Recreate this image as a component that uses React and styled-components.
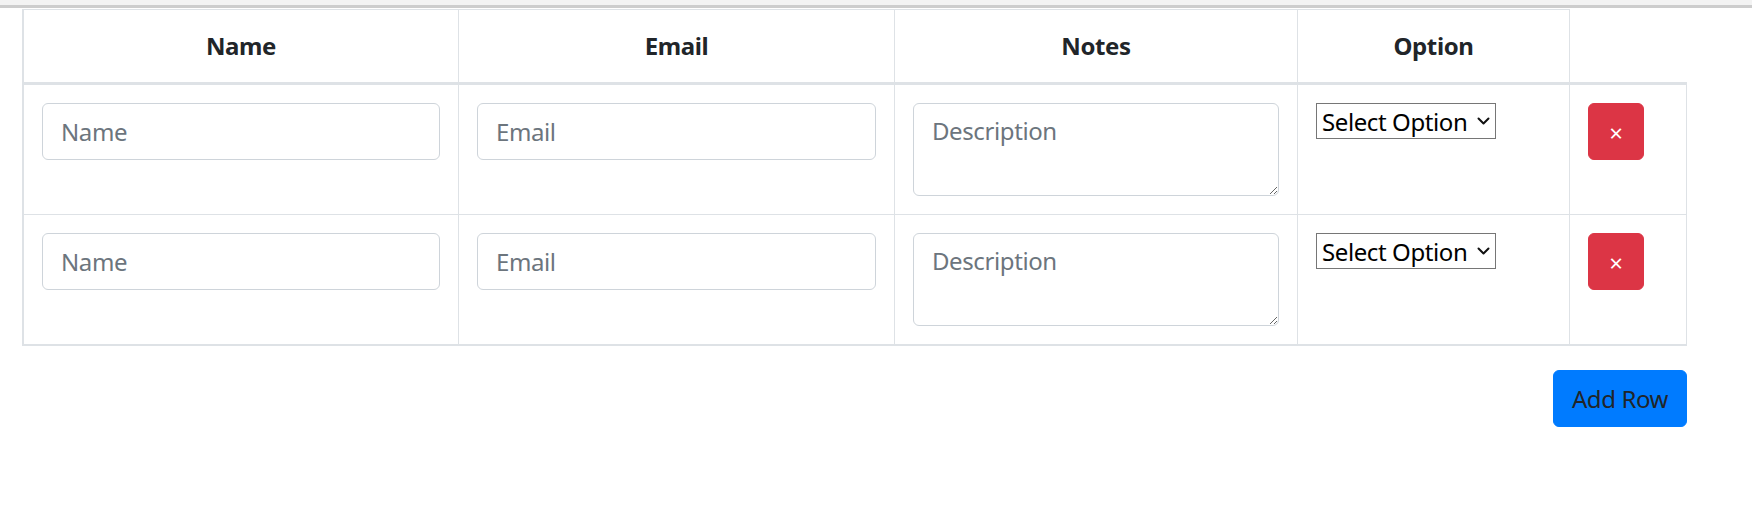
import React from 'react';
import styled, { createGlobalStyle } from 'styled-components';

const GlobalStyle = createGlobalStyle`
  body {
    margin: 0;
    background: #ffffff;
    font-family: "Noto Sans", "Open Sans", sans-serif;
    letter-spacing: -0.4px;
    color: #212529;
  }
  * {
    box-sizing: border-box;
  }
  input, textarea, select, button {
    letter-spacing: inherit;
  }
`;

const columns = [
  { key: 'name', label: 'Name', width: 435 },
  { key: 'email', label: 'Email', width: 436 },
  { key: 'notes', label: 'Notes', width: 403 },
  { key: 'option', label: 'Option', width: 272 },
];

const rows = [{ id: 1 }, { id: 2 }];

const ChevronIcon = () => (
  <svg width="13" height="8" viewBox="0 0 13 8" fill="none">
    <path d="M1.5 1.5 L6.5 6.5 L11.5 1.5" stroke="#111111" strokeWidth="2" strokeLinecap="round" strokeLinejoin="round" />
  </svg>
);

const OptionSelect = () => (
  <SelectWrap>
    <Select defaultValue="">
      <option value="">Select Option</option>
      <option value="a">Option A</option>
      <option value="b">Option B</option>
    </Select>
    <SelectArrow>
      <ChevronIcon />
    </SelectArrow>
  </SelectWrap>
);

const App = () => {
  return (
    <Page>
      <GlobalStyle />
      <TopBar />
      <Wrapper>
        <Table>
          <thead>
            <tr>
              {columns.map((col) => (
                <Th key={col.key} $w={col.width}>
                  {col.label}
                </Th>
              ))}
            </tr>
          </thead>
          <tbody>
            {rows.map((row, i) => (
              <Row key={row.id} $first={i === 0} $last={i === rows.length - 1}>
                <Td>
                  <Input type="text" placeholder="Name" />
                </Td>
                <Td>
                  <Input type="email" placeholder="Email" />
                </Td>
                <Td>
                  <TextArea placeholder="Description" rows={2} />
                </Td>
                <Td>
                  <OptionSelect />
                </Td>
                <Td>
                  <DeleteButton type="button">×</DeleteButton>
                </Td>
              </Row>
            ))}
          </tbody>
        </Table>
        <Actions>
          <AddButton type="button">Add Row</AddButton>
        </Actions>
      </Wrapper>
    </Page>
  );
};

export default App;

const Page = styled.div`
  width: 100%;
  min-height: 507px;
`;

const TopBar = styled.div`
  height: 8px;
  background: #f3f3f3;
  border-bottom: 3px solid #cdcdcd;
`;

const Wrapper = styled.div`
  width: 1687px;
  padding: 1px 0 0 22px;
`;

const Table = styled.table`
  width: 1665px;
  table-layout: fixed;
  border-collapse: separate;
  border-spacing: 0;
  border-left: 2px solid #dee2e6;
`;

const Th = styled.th`
  width: ${(p) => p.$w}px;
  padding: 18px;
  border-top: 1px solid #dee2e6;
  border-right: 1px solid #dee2e6;
  font-size: 24px;
  line-height: 36px;
  font-weight: 700;
  text-align: center;
  vertical-align: middle;
  color: #212529;
`;

const Row = styled.tr`
  & > td {
    border-top: ${(p) => (p.$first ? '3px' : '0')} solid #dee2e6;
    border-bottom: ${(p) => (p.$last ? '2px' : '1px')} solid #dee2e6;
  }
`;

const Td = styled.td`
  padding: 18px;
  border-right: 1px solid #dee2e6;
  vertical-align: top;
`;

const fieldBase = `
  display: block;
  width: 100%;
  padding: 9px 18px;
  font-family: inherit;
  font-size: 24px;
  line-height: 36px;
  color: #495057;
  background: #ffffff;
  border: 1px solid #ced4da;
  border-radius: 6px;
  outline: none;
  &::placeholder {
    color: #6c757d;
  }
`;

const Input = styled.input`
  ${fieldBase}
  height: 57px;
`;

const TextArea = styled.textarea`
  ${fieldBase}
  height: 93px;
  resize: vertical;
`;

const SelectWrap = styled.div`
  position: relative;
  width: 180px;
  height: 36px;
`;

const Select = styled.select`
  appearance: none;
  width: 100%;
  height: 100%;
  padding: 0 28px 0 5px;
  font-family: inherit;
  font-size: 24px;
  color: #000000;
  background: #ffffff;
  border: 1px solid #767676;
  border-radius: 0;
  outline: none;
`;

const SelectArrow = styled.span`
  position: absolute;
  right: 6px;
  top: 14px;
  display: flex;
  pointer-events: none;
`;

const DeleteButton = styled.button`
  width: 56px;
  height: 57px;
  padding: 3px 0 0;
  font-family: inherit;
  font-size: 24px;
  line-height: 36px;
  color: #ffffff;
  background: #dc3545;
  border: 1px solid #dc3545;
  border-radius: 6px;
  cursor: pointer;
`;

const Actions = styled.div`
  display: flex;
  justify-content: flex-end;
  margin-top: 24px;
`;

const AddButton = styled.button`
  width: 134px;
  height: 57px;
  padding: 0;
  font-family: inherit;
  font-size: 24px;
  line-height: 36px;
  color: #212529;
  background: #007bff;
  border: 1px solid #007bff;
  border-radius: 6px;
  cursor: pointer;
`;
